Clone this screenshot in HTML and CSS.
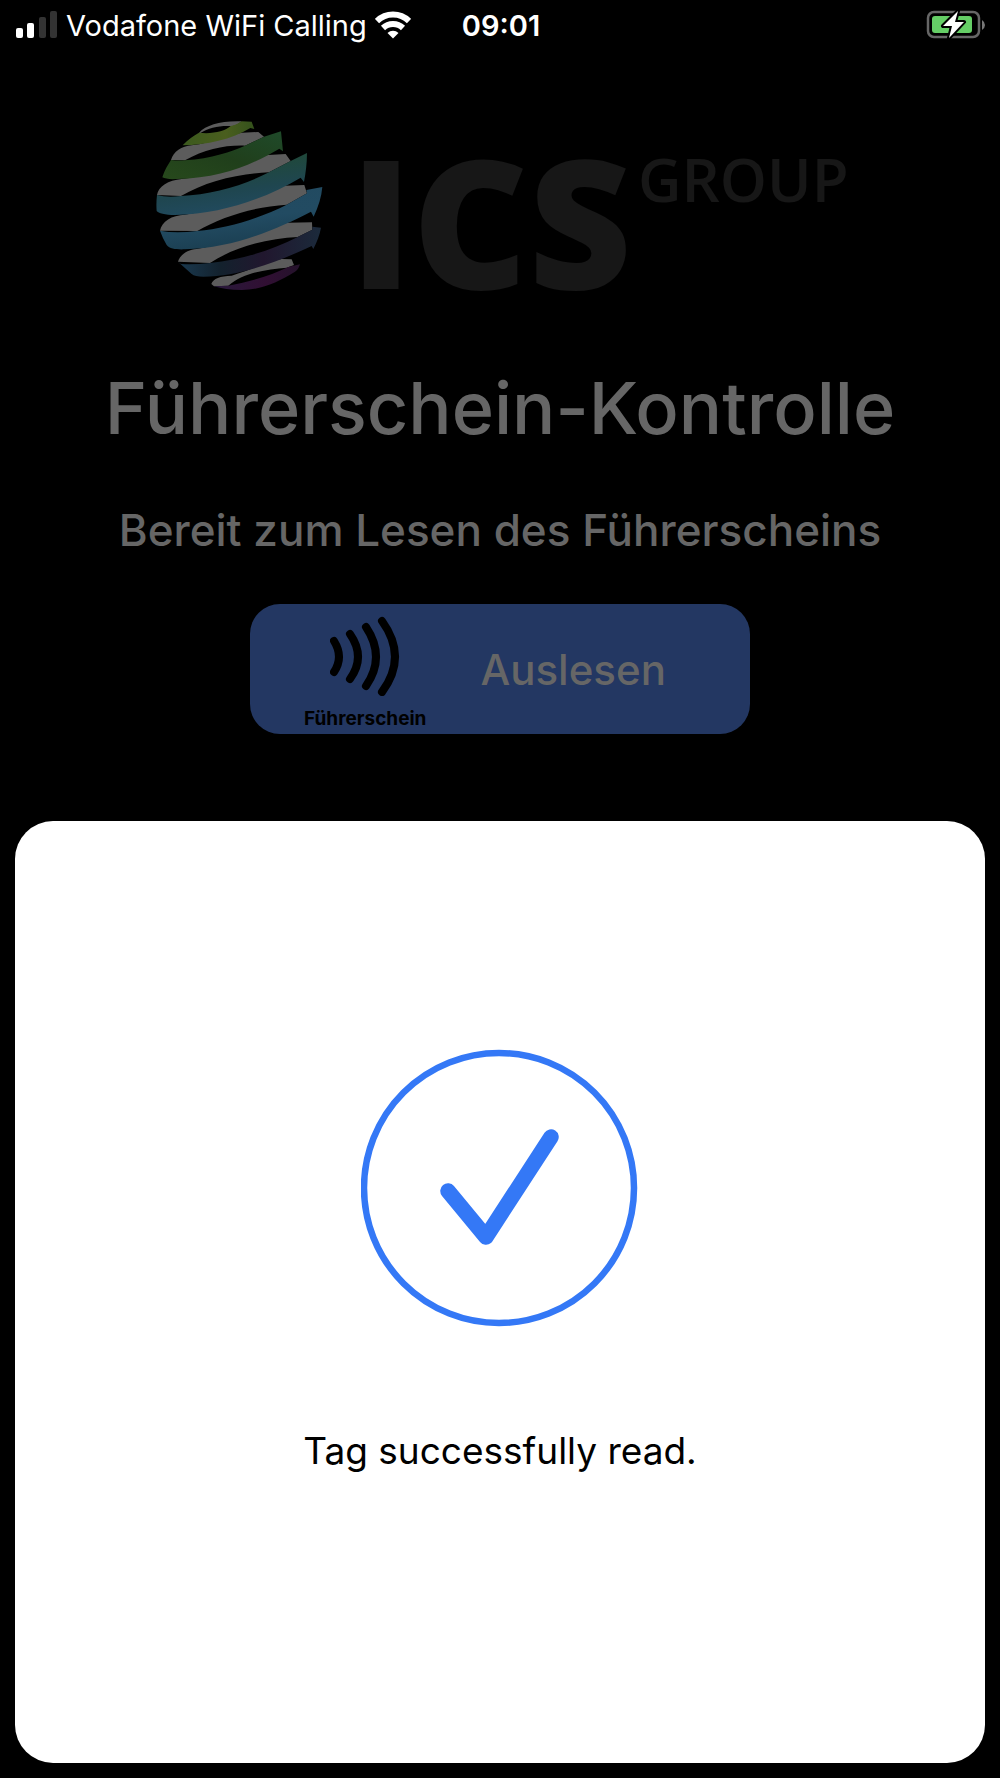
FILE: index.html
```html
<!DOCTYPE html>
<html lang="de">
<head>
  <meta charset="UTF-8" />
  <meta name="viewport" content="width=device-width, initial-scale=1.0"/>
  <title>Führerschein-Kontrolle</title>
  <link rel="stylesheet" href="styles.css">
</head>
<body>
  <header class="status-bar">
    <div class="carrier">
      <svg class="signal" viewBox="0 0 42 28" aria-hidden="true">
        <rect x="0" y="17" width="7" height="10" rx="2" fill="#fff"/>
        <rect x="11" y="12" width="7" height="15" rx="2" fill="#fff"/>
        <rect x="23" y="6" width="7" height="21" rx="2" fill="#333"/>
        <rect x="34" y="0" width="7" height="27" rx="2" fill="#333"/>
      </svg>
      <span>Vodafone WiFi Calling</span>
      <svg class="wifi" viewBox="0 0 36 28" aria-hidden="true">
        <g fill="none" stroke="#fff" stroke-width="6">
          <path d="M2 10a23 23 0 0 1 32 0"/>
          <path d="M8 17a14.500 14.500 0 0 1 20 0"/>
        </g>
        <path d="M12.500 22a8 8 0 0 1 11 0L18 27.500z" fill="#fff"/>
      </svg>
    </div>
    <time class="clock">09:01</time>
    <svg class="battery" viewBox="0 0 60 30" aria-hidden="true">
      <rect x="2" y="2" width="51" height="25" rx="6" fill="none" stroke="#666" stroke-width="2.500"/>
      <path d="M56 10q3 2 3 5t-3 5z" fill="#777"/>
      <rect x="6" y="6" width="40" height="17" rx="3" fill="#65ce66"/>
      <path d="M32 1L17 16h9l-3 12 15-16h-9z" fill="#fff" stroke="#000" stroke-width="4" stroke-linejoin="round" paint-order="stroke"/>
    </svg>
  </header>

  <main class="main">
    <svg class="logo" viewBox="0 -25 700 260" role="img" aria-label="ICS Group">
      <defs>
        <linearGradient id="olive" x1="0" y1="0" x2="1" y2="0"><stop offset="0" stop-color="#3c5a1e"/><stop offset=".6" stop-color="#4a5e1e"/><stop offset="1" stop-color="#34521c"/></linearGradient>
        <linearGradient id="green" x1="0" y1="1" x2="1" y2="0"><stop offset="0" stop-color="#27491c"/><stop offset=".5" stop-color="#203f1b"/><stop offset="1" stop-color="#1f4a2a"/></linearGradient>
        <linearGradient id="teal" x1="0" y1="0" x2=".3" y2="1"><stop offset="0" stop-color="#204a2c"/><stop offset=".7" stop-color="#1f4650"/><stop offset="1" stop-color="#214a5e"/></linearGradient>
        <linearGradient id="blue" x1="0" y1="0" x2=".3" y2="1"><stop offset="0" stop-color="#214a60"/><stop offset=".6" stop-color="#224b62"/><stop offset="1" stop-color="#1b3f52"/></linearGradient>
        <linearGradient id="navy" x1="0" y1="0" x2="1" y2="0"><stop offset="0" stop-color="#1a3a50"/><stop offset=".3" stop-color="#13212d"/><stop offset=".6" stop-color="#21172e"/><stop offset="1" stop-color="#1b2a3b"/></linearGradient>
        <linearGradient id="purple" x1="0" y1="0" x2="1" y2="0"><stop offset="0" stop-color="#281a3b"/><stop offset=".6" stop-color="#310f33"/><stop offset="1" stop-color="#24122b"/></linearGradient>
      </defs>
      <!-- globe -->
      <g transform="translate(-5 -5) scale(.3333)">
        <g fill="#5c5c5c">
          <path d="M162 68C185 45 225 32 290 34C275 46 265 50 257 48C225 46 190 53 166 69Z"/>
          <path d="M78 150C85 125 110 108 140 106C200 98 260 70 292 68L340 66L357 80L300 107C240 105 180 118 120 151Z"/>
          <path d="M36 255C40 230 70 210 110 207C220 195 290 140 370 135L422 132L437 153L372 187C280 190 180 215 108 258Z"/>
          <path d="M45 362C50 335 80 315 120 314C230 300 330 235 420 227L478 225L486 250L425 284C330 290 230 320 157 363Z"/>
          <path d="M99 455C105 435 125 420 155 417C260 400 350 345 430 338L501 337L502 359L458 381C370 385 270 410 195 459Z"/>
          <path d="M199 522C205 505 225 498 260 497C320 480 370 452 410 447L440 448L447 465L425 473C370 478 300 485 250 527L207 529Z"/>
        </g>
        <path fill="url(#olive)" d="M113 106C130 88 145 77 162 68C200 73 240 64 257 48C270 46 280 41 290 34L320 35L328 57L316 54C260 88 185 105 113 106Z"/>
        <path fill="url(#green)" d="M78 150Q98 153 120 151C200 145 260 125 300 107L357 80L408 64L414 124L403 116C320 165 230 205 95 207Q65 209 52 202C58 182 68 165 78 150Z"/>
        <path fill="url(#teal)" d="M36 255Q65 263 108 258C200 255 300 225 372 187L437 153L486 129C486 160 482 190 477 216L467 203C370 260 240 312 90 315C60 315 40 310 35 303Q33 280 36 255Z"/>
        <path fill="url(#blue)" d="M45 362Q90 371 157 363C250 355 350 322 425 284L486 250L484 240L532 231C530 260 520 290 506 320L498 305C400 355 270 415 120 418C95 419 75 417 65 405Q53 385 45 362Z"/>
        <path fill="url(#navy)" d="M99 455L108 462Q150 464 195 459C290 450 380 420 458 381L502 359V350L528 353C524 375 516 395 505 417L500 408C410 450 290 500 175 500Q150 500 140 492Z"/>
        <path fill="url(#purple)" d="M207 529L250 527C320 515 380 495 430 471L465 463Q460 480 450 485C400 515 350 540 290 540Q240 540 207 529Z"/>
      </g>
      <text class="logo-ics" x="200" y="174">ICS</text>
      <text class="logo-group" x="488" y="87">GROUP</text>
    </svg>

    <h1 class="title">Führerschein-Kontrolle</h1>
    <p class="subtitle">Bereit zum Lesen des Führerscheins</p>

    <button class="read-button" type="button">
      <span class="nfc">
        <svg class="nfc-icon" viewBox="0 0 70 80" aria-hidden="true">
          <g fill="none" stroke="#000" stroke-width="8" stroke-linecap="round">
            <path d="M4 25Q14 41 4 56"/>
            <path d="M20 18Q36 41 20 63"/>
            <path d="M36 11Q56 41 36 70"/>
            <path d="M52 5Q78 41 52 76"/>
          </g>
        </svg>
        <span class="nfc-label">Führerschein</span>
      </span>
      <span>Auslesen</span>
    </button>
  </main>

  <section class="sheet" role="dialog" aria-labelledby="sheetText">
    <svg class="check" viewBox="0 0 278 278" aria-hidden="true">
      <circle cx="138" cy="139" r="135" fill="none" stroke="#3478f6" stroke-width="6.500"/>
      <path d="M87 142L125 188L190 88" fill="none" stroke="#3478f6" stroke-width="15.500" stroke-linecap="round" stroke-linejoin="round"/>
    </svg>
    <p class="sheet-text" id="sheetText" lang="en">Tag successfully read.</p>
  </section>
</body>
</html>
```

FILE: styles.css
```css
* {
  box-sizing: border-box;
}
body {
  margin: 0;
  min-height: 100vh;
  display: flex;
  flex-direction: column;
  font-family: Inter, "Liberation Sans", sans-serif;
  background: #000;
  color: #666;
}
.status-bar {
  display: grid;
  grid-template-columns: 1fr auto 1fr;
  align-items: center;
  height: 50px;
  padding: 0 14px 0 16px;
  color: white;
  font-size: 29px;
}
.carrier {
  display: flex;
  align-items: center;
  gap: 8px;
  white-space: nowrap;
}
.signal {
  width: 42px;
  height: 28px;
}
.wifi {
  width: 36px;
  height: 28px;
}
.clock {
  font-weight: 600;
}
.battery {
  width: 60px;
  height: 30px;
  justify-self: end;
}
.main {
  display: flex;
  flex-direction: column;
  align-items: center;
  padding: 40px 0 87px;
}
.logo {
  width: 70%;
}
.logo text {
  font-family: "Open Sans", "Noto Sans", sans-serif;
  fill: #171717;
}
.logo .logo-ics {
  font-size: 179px;
  font-weight: 800;
}
.logo .logo-group {
  font-size: 60px;
  font-weight: 600;
}
.title {
  margin: 13px 0 0;
  font-size: 72px;
  line-height: 90px;
  font-weight: 500;
  text-align: center;
}
.subtitle {
  margin: 49px 0 0;
  font-size: 44px;
  line-height: 56px;
  font-weight: 500;
  text-align: center;
}
.read-button {
  display: flex;
  align-items: center;
  gap: 54px;
  width: 50%;
  min-width: 420px;
  height: 130px;
  margin-top: 46px;
  padding: 0 54px;
  border: none;
  border-radius: 30px;
  background: #233762;
  color: #666;
  font-family: inherit;
  font-size: 42px;
  font-weight: 500;
  cursor: pointer;
}
.nfc {
  display: flex;
  flex-direction: column;
  align-items: center;
  gap: 12px;
  padding-top: 8px;
}
.nfc-icon {
  width: 70px;
  height: 80px;
}
.nfc-label {
  color: black;
  font-size: 19px;
  line-height: 22px;
  font-weight: 700;
}
.sheet {
  flex: 1;
  display: flex;
  flex-direction: column;
  align-items: center;
  margin: 0 15px 15px;
  padding: 228px 20px;
  border-radius: 38px;
  background: white;
}
.check {
  width: 278px;
  height: 278px;
}
.sheet-text {
  margin: 100px 0 0;
  color: black;
  font-size: 37px;
  line-height: 48px;
  text-align: center;
}
```
